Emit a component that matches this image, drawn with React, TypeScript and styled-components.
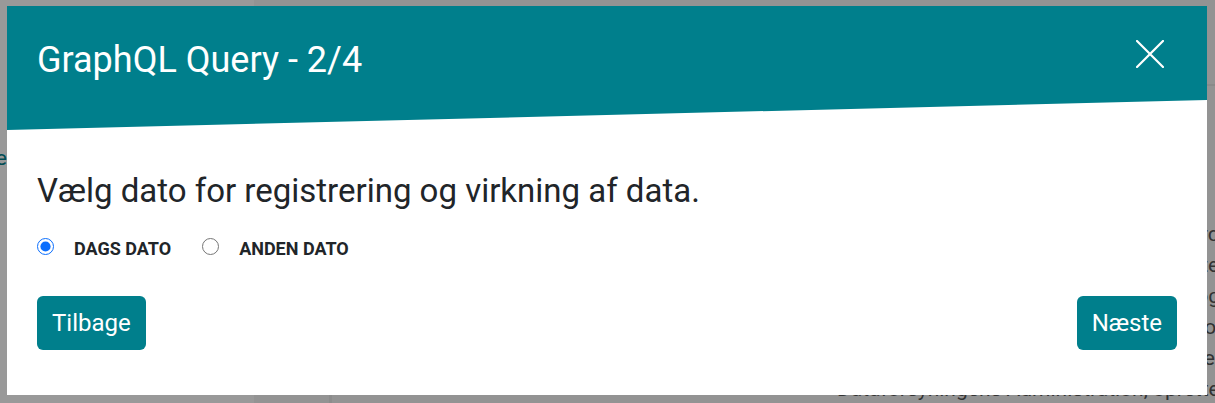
import React, { useState } from "react";
import styled, { createGlobalStyle } from "styled-components";

const GlobalStyle = createGlobalStyle`
  html, body { margin: 0; padding: 0; }
  body {
    font-family: Roboto, "Noto Sans", "Liberation Sans", sans-serif;
    width: 1215px;
    height: 403px;
    overflow: hidden;
  }
  * { box-sizing: border-box; }
`;

const Page = styled.div`
  display: flex;
  width: 1215px;
  height: 403px;
  overflow: hidden;
  background: #f5f5f5;
`;

const Sidebar = styled.aside`
  width: 254px;
  flex: none;
  background: #ffffff;
  padding-top: 143px;
`;

const SideLink = styled.div`
  width: 7px;
  display: flex;
  justify-content: flex-end;
  white-space: nowrap;
  color: #007f8c;
  font-size: 21px;
  line-height: 30px;
`;

const Main = styled.main`
  flex: 1;
  display: flex;
  flex-direction: column;
`;

const TopBar = styled.div`
  height: 86px;
  flex: none;
  border-bottom: 2px solid #e6e6e6;
`;

const Content = styled.div`
  flex: 1;
  display: flex;
  padding-left: 75px;
`;

const Card = styled.div`
  flex: 1;
  border-left: 3px solid #e9e9e9;
  padding: 133px 0 0 505px;
`;

const Article = styled.div`
  width: 520px;
  color: #555555;
  font-size: 21px;
  line-height: 31px;
  white-space: nowrap;
`;

const Overlay = styled.div`
  position: fixed;
  inset: 0;
  background: rgba(0, 0, 0, 0.4);
  display: flex;
  justify-content: flex-start;
  align-items: flex-start;
  padding: 6px 0 0 7px;
`;

const Modal = styled.div`
  width: 1200px;
  height: 389px;
  background: #ffffff;
  display: flex;
  flex-direction: column;
  overflow: hidden;
`;

const Header = styled.div`
  height: 124px;
  flex: none;
  background: #007f8c;
  clip-path: polygon(0 0, 100% 0, 100% 94px, 0 100%);
  display: flex;
  justify-content: space-between;
  align-items: flex-start;
  padding: 0 30px;
`;

const Title = styled.h2`
  margin: 0;
  padding-top: 33px;
  color: #ffffff;
  font-size: 36px;
  font-weight: 400;
  line-height: 42px;
`;

const CloseButton = styled.button`
  margin-top: 33px;
  margin-right: 12px;
  width: 30px;
  height: 30px;
  padding: 0;
  border: none;
  background: transparent;
  display: flex;
  align-items: center;
  justify-content: center;
  cursor: pointer;
`;

const Body = styled.div`
  flex: 1;
  display: flex;
  flex-direction: column;
  padding: 41px 30px 0;
`;

const Question = styled.p`
  margin: 0;
  color: #212529;
  font-size: 33px;
  line-height: 40px;
`;

const RadioRow = styled.div`
  display: flex;
  align-items: flex-start;
  gap: 31px;
  margin-top: 27px;
`;

const RadioLabel = styled.label`
  display: flex;
  align-items: flex-start;
  gap: 20px;
  cursor: pointer;
`;

const Radio = styled.input`
  width: 17px;
  height: 17px;
  margin: 0;
  accent-color: #0b6efd;
`;

const RadioText = styled.span`
  color: #212529;
  font-size: 18px;
  font-weight: 700;
  text-transform: uppercase;
  line-height: 22px;
`;

const Actions = styled.div`
  display: flex;
  justify-content: space-between;
  margin-top: 36px;
`;

const ActionButton = styled.button`
  height: 54px;
  padding: 0 15px;
  border: none;
  border-radius: 6px;
  background: #007f8c;
  color: #ffffff;
  font-family: Roboto, "Noto Sans", sans-serif;
  font-size: 24px;
  cursor: pointer;
`;

export default function App() {
  const [choice, setChoice] = useState("dags");
  return (
    <>
      <GlobalStyle />
      <Page>
        <Sidebar>
          <SideLink>Vejledninger og guide</SideLink>
        </Sidebar>
        <Main>
          <TopBar />
          <Content>
            <Card>
              <Article>
                <div>Her kan du læse om tjenesterne og hvordan du bruger dem i dine systemer</div>
                <div>Du kan også læse om hvordan du opretter en bruger på siden</div>
                <div>Her findes der vejledninger, eksempler og beskrivelser af data</div>
                <div>Tjenesterne udstilles via webservices, som du kan tilgå med din bruger</div>
                <div>Der er desuden adgang til downloads, der kan hentes løbende</div>
                <div>Dataforsyningens Administration, oprette en ny tjeneste til dig</div>
              </Article>
            </Card>
          </Content>
        </Main>
      </Page>
      <Overlay>
        <Modal>
          <Header>
            <Title>GraphQL Query - 2/4</Title>
            <CloseButton aria-label="Luk">
              <svg width="28" height="28" viewBox="0 0 28 28">
                <path d="M1 1 L27 27 M27 1 L1 27" stroke="#ffffff" strokeWidth="2.2" strokeLinecap="square" />
              </svg>
            </CloseButton>
          </Header>
          <Body>
            <Question>Vælg dato for registrering og virkning af data.</Question>
            <RadioRow>
              <RadioLabel>
                <Radio type="radio" name="dato" checked={choice === "dags"} onChange={() => setChoice("dags")} />
                <RadioText>Dags dato</RadioText>
              </RadioLabel>
              <RadioLabel>
                <Radio type="radio" name="dato" checked={choice === "anden"} onChange={() => setChoice("anden")} />
                <RadioText>Anden dato</RadioText>
              </RadioLabel>
            </RadioRow>
            <Actions>
              <ActionButton>Tilbage</ActionButton>
              <ActionButton>Næste</ActionButton>
            </Actions>
          </Body>
        </Modal>
      </Overlay>
    </>
  );
}
